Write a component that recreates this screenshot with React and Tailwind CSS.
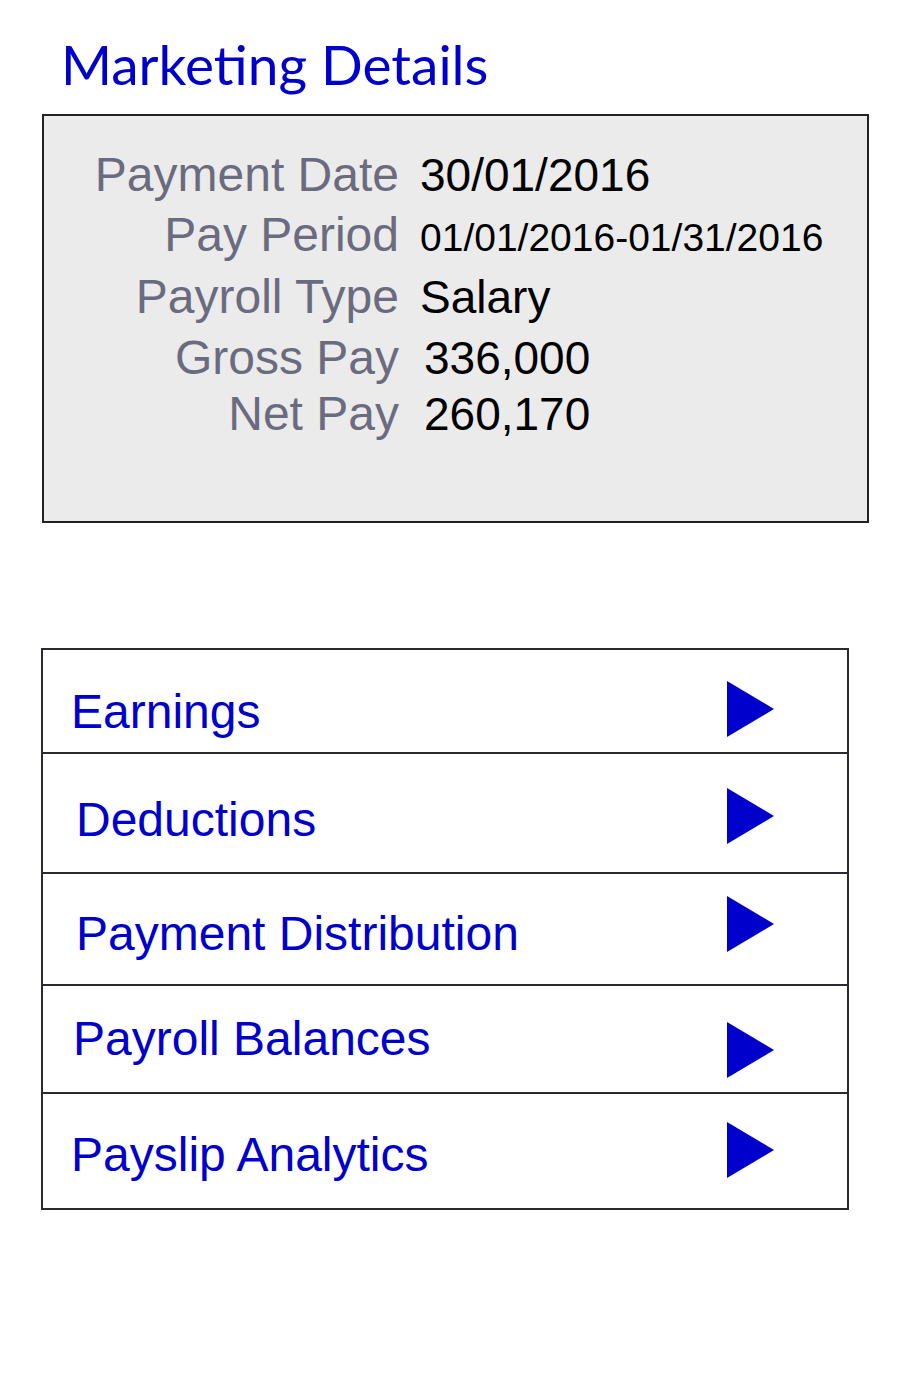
import React from 'react';

const details = [
  { label: 'Payment Date', value: '30/01/2016', row: 'h-[60px]', val: 'text-[46px] pl-[21px]' },
  { label: 'Pay Period', value: '01/01/2016-01/31/2016', row: 'h-[62px]', val: 'text-[39px] pl-[21px]' },
  { label: 'Payroll Type', value: 'Salary', row: 'h-[61px]', val: 'text-[46px] pl-[21px]' },
  { label: 'Gross Pay', value: '336,000', row: 'h-[56px]', val: 'text-[46px] pl-[25px]' },
  { label: 'Net Pay', value: '260,170', row: 'h-[56px]', val: 'text-[46px] pl-[25px]' },
];

const sections = [
  { label: 'Earnings', row: 'h-[104px] border-b-2', text: 'pt-[38px] pl-[28px]', tri: 'mt-[31px]' },
  { label: 'Deductions', row: 'h-[120px] border-b-2', text: 'pt-[42px] pl-[33px]', tri: 'mt-[34px]' },
  { label: 'Payment Distribution', row: 'h-[112px] border-b-2', text: 'pt-[36px] pl-[33px]', tri: 'mt-[22px]' },
  { label: 'Payroll Balances', row: 'h-[108px] border-b-2', text: 'pt-[29px] pl-[30px]', tri: 'mt-[36px]' },
  { label: 'Payslip Analytics', row: 'h-[114px]', text: 'pt-[37px] pl-[28px]', tri: 'mt-[28px]' },
];

const Arrow = () => (
  <svg width="47" height="56" viewBox="0 0 47 56" className="block">
    <polygon points="0,0 47,28 0,56" fill="#0000cc" />
  </svg>
);

export default function App() {
  return (
    <div className="w-[900px] min-h-[1400px] bg-white pt-[29px]" style={{ fontFamily: '"Liberation Sans", Arial, sans-serif' }}>
      {/* Title */}
      <h1 className="pl-[61px] text-[55px] leading-[70px] text-[#0000cc]" style={{ fontFamily: 'Lato, "Open Sans", sans-serif' }}>
        Marketing Details
      </h1>

      {/* Summary box */}
      <div className="ml-[42px] mt-[15px] w-[827px] h-[409px] border-2 border-[#222] bg-[#ebebeb] pt-[35px]">
        {details.map((d) => (
          <div key={d.label} className={`flex items-baseline ${d.row}`}>
            <div className="w-[355px] text-right text-[48px] leading-[48px] text-[#6b6b7f]">{d.label}</div>
            <div className={`leading-[48px] text-black ${d.val}`}>{d.value}</div>
          </div>
        ))}
      </div>

      {/* Section list */}
      <div className="ml-[41px] mt-[125px] w-[808px] border-2 border-[#2a2a33]">
        {sections.map((s) => (
          <div key={s.label} className={`flex border-[#2a2a33] ${s.row}`}>
            <div className={`flex-1 text-[48px] leading-[48px] text-[#0000cc] ${s.text}`}>{s.label}</div>
            <div className={`mr-[73px] ${s.tri}`}>
              <Arrow />
            </div>
          </div>
        ))}
      </div>
    </div>
  );
}
